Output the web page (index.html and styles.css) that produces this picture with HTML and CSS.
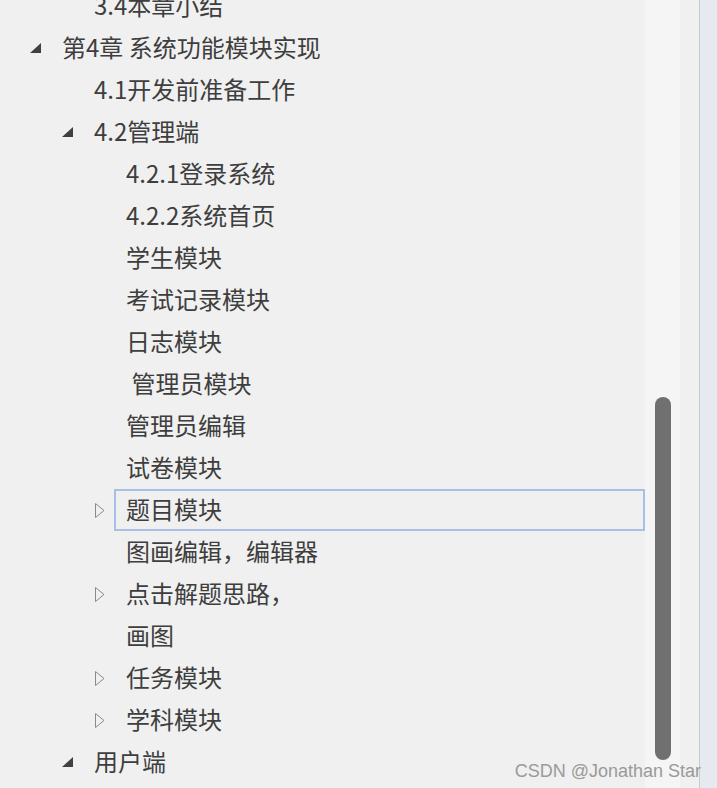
FILE: index.html
```html
<!DOCTYPE html>
<html lang="zh-CN">
<head>
<meta charset="utf-8">
<title>目录</title>
<link rel="stylesheet" href="styles.css">
</head>
<body>
<div class="window">
  <div class="tree-pane">
    <ul class="tree">
      <li>
        <ul class="sub">
          <li><div class="row"><span class="tw"></span><span class="label">3.4本章小结</span></div></li>
        </ul>
      </li>
      <li>
        <div class="row"><span class="tw"><svg class="exp" width="11" height="10" viewBox="0 0 11 10"><polygon points="11,0 11,10 0,10"/></svg></span><span class="label">第4章 系统功能模块实现</span></div>
        <ul class="sub">
          <li><div class="row"><span class="tw"></span><span class="label">4.1开发前准备工作</span></div></li>
          <li>
            <div class="row"><span class="tw"><svg class="exp" width="11" height="10" viewBox="0 0 11 10"><polygon points="11,0 11,10 0,10"/></svg></span><span class="label">4.2管理端</span></div>
            <ul class="sub">
              <li><div class="row"><span class="tw"></span><span class="label">4.2.1登录系统</span></div></li>
              <li><div class="row"><span class="tw"></span><span class="label">4.2.2系统首页</span></div></li>
              <li><div class="row"><span class="tw"></span><span class="label">学生模块</span></div></li>
              <li><div class="row"><span class="tw"></span><span class="label">考试记录模块</span></div></li>
              <li><div class="row"><span class="tw"></span><span class="label">日志模块</span></div></li>
              <li><div class="row"><span class="tw"></span><span class="label"> 管理员模块</span></div></li>
              <li><div class="row"><span class="tw"></span><span class="label">管理员编辑</span></div></li>
              <li><div class="row"><span class="tw"></span><span class="label">试卷模块</span></div></li>
              <li><div class="row"><span class="tw"><svg class="col" width="11" height="17" viewBox="0 0 11 17"><polygon points="1.5,1.5 10,8.5 1.5,15.5"/></svg></span><span class="label selected">题目模块</span></div></li>
              <li><div class="row"><span class="tw"></span><span class="label">图画编辑，编辑器</span></div></li>
              <li><div class="row"><span class="tw"><svg class="col" width="11" height="17" viewBox="0 0 11 17"><polygon points="1.5,1.5 10,8.5 1.5,15.5"/></svg></span><span class="label">点击解题思路，</span></div></li>
              <li><div class="row"><span class="tw"></span><span class="label">画图</span></div></li>
              <li><div class="row"><span class="tw"><svg class="col" width="11" height="17" viewBox="0 0 11 17"><polygon points="1.5,1.5 10,8.5 1.5,15.5"/></svg></span><span class="label">任务模块</span></div></li>
              <li><div class="row"><span class="tw"><svg class="col" width="11" height="17" viewBox="0 0 11 17"><polygon points="1.5,1.5 10,8.5 1.5,15.5"/></svg></span><span class="label">学科模块</span></div></li>
            </ul>
          </li>
          <li><div class="row"><span class="tw"><svg class="exp" width="11" height="10" viewBox="0 0 11 10"><polygon points="11,0 11,10 0,10"/></svg></span><span class="label">用户端</span></div></li>
        </ul>
      </li>
    </ul>
  </div>
  <div class="scroll-track"><div class="thumb"></div></div>
  <div class="gutter"></div>
  <div class="side-pane"></div>
  <div class="watermark">CSDN @Jonathan Star</div>
</div>
</body>
</html>
```
FILE: styles.css
```css
html, body {
  margin: 0;
  padding: 0;
  background: #f0f0f0;
}
.window {
  position: relative;
  display: flex;
  width: 717px;
  height: 788px;
  overflow: hidden;
  background: #f0f0f0;
}
.tree-pane {
  width: 645px;
  height: 788px;
  overflow: hidden;
}
.tree, .sub {
  list-style: none;
  margin: 0;
  padding: 0;
}
.tree {
  margin-top: -15px;
  padding-left: 30px;
}
.sub {
  padding-left: 32px;
}
.row {
  display: flex;
  align-items: stretch;
  height: 42px;
}
.tw {
  width: 20px;
  flex: 0 0 20px;
  display: flex;
  align-items: center;
  justify-content: flex-start;
}
.exp polygon {
  fill: #404040;
}
.col polygon {
  fill: none;
  stroke: #8a8a8a;
  stroke-width: 1;
}
.label {
  flex: 1;
  box-sizing: border-box;
  border: 2px solid transparent;
  padding-left: 10px;
  padding-bottom: 3px;
  display: flex;
  align-items: center;
  white-space: pre;
  font-family: "Noto Sans CJK SC", "Noto Sans", sans-serif;
  font-size: 24px;
  color: #3e3e3e;
}
.label.selected {
  border-color: #a9c0e6;
}
.scroll-track {
  width: 35px;
  flex: 0 0 35px;
  background: #f5f5f5;
  position: relative;
}
.thumb {
  position: absolute;
  left: 10px;
  top: 397px;
  width: 16px;
  height: 363px;
  border-radius: 8px;
  background: #707070;
}
.gutter {
  width: 19px;
  flex: 0 0 19px;
  background: #f0f0f0;
}
.side-pane {
  flex: 1;
  border-left: 1px solid #cbcbcb;
  background: #e6e9ef;
}
.watermark {
  position: absolute;
  right: 16px;
  bottom: 6px;
  font-family: "Liberation Sans", Arial, sans-serif;
  font-size: 18px;
  color: #9a9a9a;
  white-space: nowrap;
}
```
